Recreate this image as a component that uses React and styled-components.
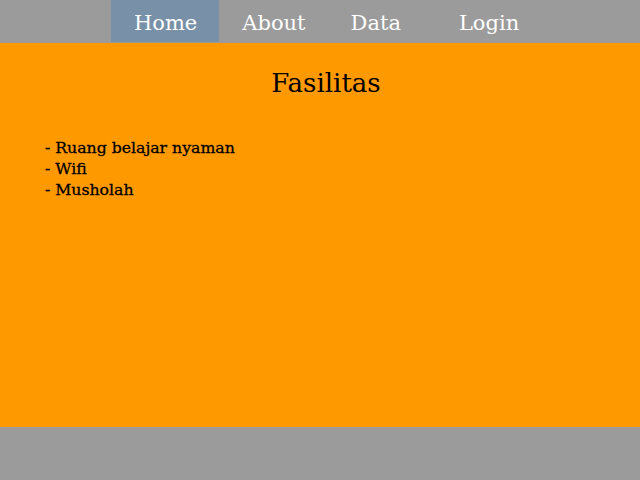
import React from "react";
import styled, { createGlobalStyle } from "styled-components";

const GlobalStyle = createGlobalStyle`
    html, body {
        margin: 0;
        padding: 0;
        height: 100%;
    }

    body {
        font-family: "DejaVu Serif", Georgia, serif;
        background: #9b9b9b;
    }
`;

function App() {
    const menu = ["Home", "About", "Data", "Login"];

    return (
        <Page>
            <GlobalStyle />
            <NavBar>
                {menu.map((item, i) => (
                    <NavItem key={item} href="#" $active={i === 0}>{item}</NavItem>
                ))}
            </NavBar>
            <Content>
                <Title>Fasilitas</Title>
                <List>
                    <li>- Ruang belajar nyaman</li>
                    <li>- Wifi</li>
                    <li>- Musholah</li>
                </List>
            </Content>
            <Footer />
        </Page>
    );
}

export default App;

const Page = styled.div`
    display: flex;
    flex-direction: column;
    width: 640px;
    height: 480px;
`;

const NavBar = styled.nav`
    display: flex;
    align-items: flex-start;
    height: 43px;
    padding-left: 111px;
    background: #9b9b9b;
`;

const NavItem = styled.a`
    display: flex;
    align-items: center;
    box-sizing: border-box;
    width: 108.3px;
    height: 42px;
    padding-left: 23px;
    padding-top: 4px;
    font-size: 21px;
    color: #fff;
    text-decoration: none;
    background: ${(p) => (p.$active ? "#7890a8" : "transparent")};
`;

const Content = styled.main`
    flex: 1;
    background: #ff9900;
    padding: 0 33px 0 45px;
`;

const Title = styled.h1`
    margin: 21px 0 0;
    text-align: center;
    font-size: 26px;
    font-weight: normal;
    line-height: 38px;
    color: #000;
`;

const List = styled.ul`
    list-style: none;
    margin: 35px 0 0;
    padding: 0;
    font-size: 15.7px;
    line-height: 21px;
    color: #000;
    -webkit-text-stroke: 0.3px #000;
`;

const Footer = styled.footer`
    height: 53px;
    background: #9b9b9b;
`;
